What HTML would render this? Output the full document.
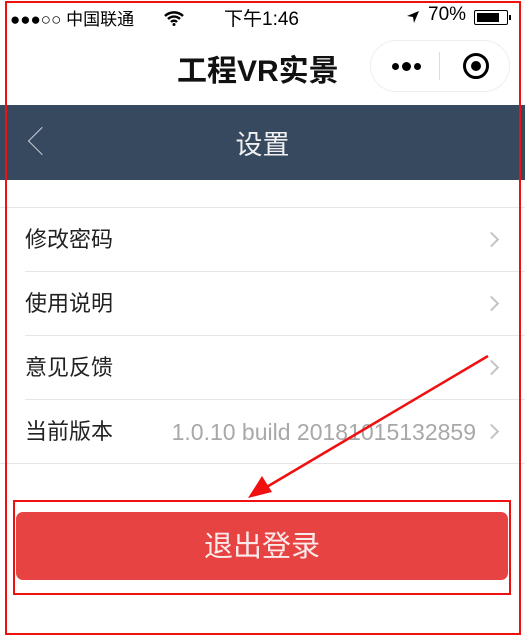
<!DOCTYPE html>
<html><head><meta charset="utf-8"><style>
*{margin:0;padding:0;box-sizing:border-box}
body{width:525px;height:641px;background:#fff;position:relative;overflow:hidden;font-family:"Liberation Sans","Noto Sans CJK SC",sans-serif}
.a{position:absolute}
.row{position:absolute;left:25px;right:0;height:64px;border-bottom:1px solid #e5e5e5;font-size:22px;color:#222;line-height:64px}
.chev{position:absolute;right:28px;top:26px;width:11px;height:11px;border-top:2px solid #c4c4c4;border-right:2px solid #c4c4c4;transform:rotate(45deg)}
</style></head><body>
<div class="a" style="left:10px;top:5px;font-size:17px;color:#000">●●●○○ 中国联通</div>
<svg class="a" style="left:163px;top:10px" width="22" height="16" viewBox="0 0 22 16"><path d="M2 6a13 13 0 0 1 18 0M5 9a8.5 8.5 0 0 1 12 0M8 12a4 4 0 0 1 6 0" stroke="#000" stroke-width="2.4" fill="none"/><circle cx="11" cy="14.5" r="1.5"/></svg>
<div class="a" style="left:224px;top:4px;font-size:19px;color:#000">下午1:46</div>
<svg class="a" style="left:406px;top:10px" width="14" height="14" viewBox="0 0 14 14"><path d="M13 1L1 6l6 1 1 6z" fill="#000"/></svg>
<div class="a" style="left:428px;top:4px;font-size:19px;color:#000">70%</div>
<div class="a" style="left:474px;top:10px;width:34px;height:15px;border:1.5px solid #000;border-radius:2px"><div style="margin:1.5px;width:22px;height:9px;background:#000"></div></div>
<div class="a" style="left:509px;top:15px;width:2px;height:5px;background:#000"></div>
<div class="a" style="left:177px;top:46px;font-size:30px;font-weight:bold;color:#111">工程VR实景</div>
<div class="a" style="left:370px;top:40px;width:140px;height:52px;border:1px solid #eee;border-radius:26px"></div>
<div class="a" style="left:439px;top:52px;width:1px;height:28px;background:#ddd"></div>
<div class="a" style="left:392px;top:63px;width:7px;height:7px;border-radius:50%;background:#000"></div>
<div class="a" style="left:402px;top:62px;width:9px;height:9px;border-radius:50%;background:#000"></div>
<div class="a" style="left:414px;top:63px;width:7px;height:7px;border-radius:50%;background:#000"></div>
<div class="a" style="left:463px;top:53px;width:26px;height:26px;border-radius:50%;border:3px solid #000"></div>
<div class="a" style="left:471px;top:61px;width:10px;height:10px;border-radius:50%;background:#000"></div>
<div class="a" style="left:0;top:105px;width:525px;height:75px;background:#36495e"></div>
<div class="a" style="left:32px;top:131px;width:20px;height:20px;border-left:1.5px solid #c8cdd3;border-bottom:1.5px solid #c8cdd3;transform:rotate(45deg)"></div>
<div class="a" style="left:0;top:123px;width:525px;text-align:center;font-size:27px;color:#f0f0f0">设置</div>
<div class="a" style="left:0;top:207px;width:525px;height:1px;background:#e5e5e5"></div>
<div class="row" style="top:208px">修改密码<div class="chev"></div></div>
<div class="row" style="top:272px">使用说明<div class="chev"></div></div>
<div class="row" style="top:336px">意见反馈<div class="chev"></div></div>
<div class="row" style="top:400px;left:0;padding-left:25px">当前版本<span style="position:absolute;right:49px;color:#a8a8a8;font-size:23px">1.0.10 build 20181015132859</span><div class="chev"></div></div>
<div class="a" style="left:16px;top:512px;width:492px;height:68px;background:#e84343;border-radius:7px;color:#fbeaea;font-size:29px;text-align:center;line-height:70px">退出登录</div>
<div class="a" style="left:13px;top:500px;width:498px;height:95px;border:2px solid #f01010"></div>
<div class="a" style="left:5px;top:1px;width:516px;height:634px;border:2px solid #f01010"></div>
<svg class="a" style="left:0;top:0" width="525" height="641"><line x1="488" y1="356" x2="265" y2="488" stroke="#f01010" stroke-width="2.5"/><path d="M248 498L262 476L272 492z" fill="#f01010"/></svg>
</body></html>
